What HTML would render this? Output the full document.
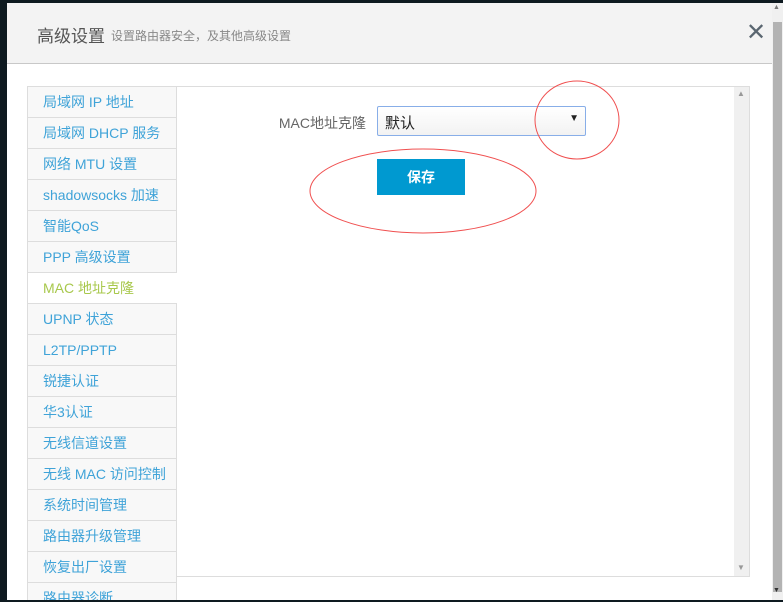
<!DOCTYPE html>
<html><head><meta charset="utf-8"><style>
*{margin:0;padding:0;box-sizing:border-box}
body{width:783px;height:602px;overflow:hidden;background:#0e1a20;font-family:"Liberation Sans","Noto Sans CJK SC",sans-serif;position:relative}
.modal{position:absolute;left:7px;top:3px;width:765px;height:597px;background:#fff;overflow:hidden}
.hd{position:absolute;left:0;top:0;width:765px;height:61px;background:#f3f3f3;border-bottom:1px solid #c8c8c8}
.hd .t{position:absolute;left:30px;top:19px;font-size:17px;color:#555}
.hd .s{position:absolute;left:104px;top:24px;font-size:12px;color:#888}
.hd .x{position:absolute;left:739px;top:15px;font-size:24px;color:#5a6670}
.side{position:absolute;left:20px;top:83px;width:150px}
.side div{height:31px;border:1px solid #ddd;border-top:none;background:#f8f8f8;color:#3fa3d8;font-size:14px;padding-left:15px;line-height:30px}
.side div:first-child{border-top:1px solid #ddd;height:32px}
.side .a{background:#fff;color:#a8c84c;border-right:none}
.box{position:absolute;left:170px;top:83px;width:573px;height:491px;border:1px solid #ddd;border-left:none}
.sb{position:absolute;right:0;top:0;width:15px;height:100%;background:#f0f0f0}
.osb{position:absolute;left:772px;top:3px;width:11px;height:597px;background:#f0f0f0}
.th{position:absolute;left:1px;top:19px;width:9px;height:570px;background:#b3b3b3}
</style></head><body>
<div class="modal">
<div class="hd"><span class="t">高级设置</span><span class="s">设置路由器安全，及其他高级设置</span><span class="x">✕</span></div>
<div class="box"><div class="sb"><span style="position:absolute;left:3px;top:2px;font-size:8px;color:#999">▲</span><span style="position:absolute;left:3px;bottom:4px;font-size:8px;color:#999">▼</span></div></div>
<div class="side">
<div>局域网 IP 地址</div><div>局域网 DHCP 服务</div><div>网络 MTU 设置</div><div>shadowsocks 加速</div><div>智能QoS</div><div>PPP 高级设置</div><div class="a">MAC 地址克隆</div><div>UPNP 状态</div><div>L2TP/PPTP</div><div>锐捷认证</div><div>华3认证</div><div>无线信道设置</div><div>无线 MAC 访问控制</div><div>系统时间管理</div><div>路由器升级管理</div><div>恢复出厂设置</div><div>路由器诊断</div>
</div>
</div>
<div style="position:absolute;left:250px;top:113px;width:116px;text-align:right;font-size:14px;color:#666">MAC地址克隆</div>
<div style="position:absolute;left:377px;top:106px;width:209px;height:30px;border:1px solid #88aee8;border-radius:2px;background:linear-gradient(#fff,#f2f2f2);font-size:15px;color:#222;padding:5px 0 0 7px">默认<span style="position:absolute;right:6px;top:6px;font-size:10px">▼</span></div>
<div style="position:absolute;left:377px;top:159px;width:88px;height:36px;background:#0099d0;color:#fff;font-weight:bold;font-size:14px;text-align:center;line-height:36px">保存</div>
<svg style="position:absolute;left:0;top:0" width="783" height="602"><ellipse cx="577" cy="120" rx="42" ry="39" fill="none" stroke="#f05050" stroke-width="1"/><ellipse cx="423" cy="191" rx="113" ry="42" fill="none" stroke="#f05050" stroke-width="1"/></svg>
<div class="osb"><span style="position:absolute;left:1px;top:1px;font-size:7px;color:#777">▲</span><div class="th"></div><span style="position:absolute;left:1px;bottom:6px;font-size:7px;color:#333">▼</span></div>
</body></html>
